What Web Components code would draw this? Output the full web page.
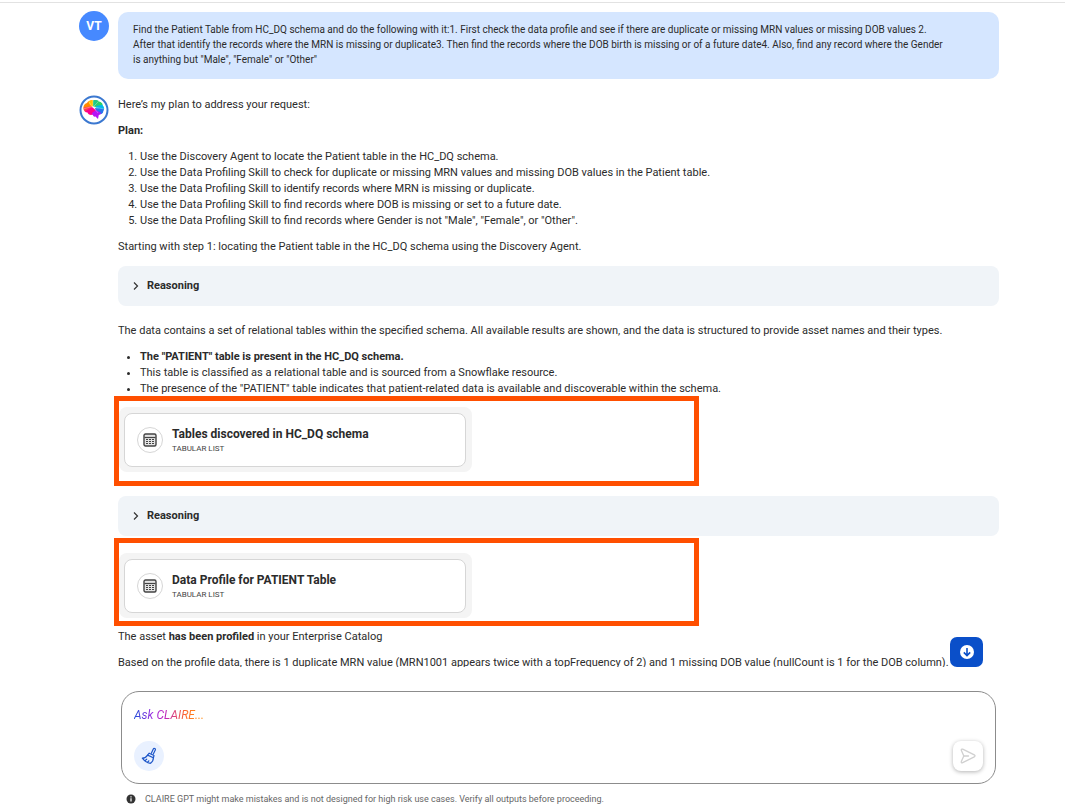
<!DOCTYPE html>
<html lang="en">
<head>
<meta charset="utf-8">
<meta name="viewport" content="width=device-width, initial-scale=1">
<title>CLAIRE GPT</title>
<style>
  body {
    margin: 0;
    background: #fff;
    color: #2b2b2b;
    font: 11px/16px Roboto, "Liberation Sans", sans-serif;
  }
</style>
</head>
<body>
<claire-chat></claire-chat>

<script>
  class ChatMessage extends HTMLElement {
    constructor() {
      super();
      this.attachShadow({ mode: "open" });
    }

    connectedCallback() {
      this.shadowRoot.innerHTML = /*html*/`
        ${ChatMessage.styles}
        <slot name="avatar"></slot>
        <div class="body"><slot></slot></div>
      `;
    }

    static get styles() {
      return /*css*/`
        <style>
          :host {
            display: grid;
            grid-template-columns: 30px minmax(0, 1fr);
            column-gap: 9px;
            align-items: start;
          }
          .body {
            margin-top: 2px;
          }
          :host([from="user"]) .body {
            box-sizing: border-box;
            margin-top: 1px;
            padding: 10px 15px 12px;
            border-radius: 10px;
            background: #d5e6ff;
            font-size: 10px;
            line-height: 15px;
          }
        </style>
      `;
    }
  }

  class UserAvatar extends HTMLElement {
    constructor() {
      super();
      this.attachShadow({ mode: "open" });
    }

    connectedCallback() {
      this.shadowRoot.innerHTML = /*html*/`
        <style>
          :host {
            display: grid;
            place-items: center;
            height: 30px;
            border-radius: 50%;
            background: #4689ff;
            color: #fff;
            font-size: 12px;
            font-weight: 700;
          }
        </style>
        <slot></slot>
      `;
    }
  }

  class ClaireAvatar extends HTMLElement {
    constructor() {
      super();
      this.attachShadow({ mode: "open" });
    }

    connectedCallback() {
      this.shadowRoot.innerHTML = /*html*/`
        <style>
          :host { display: block; height: 30px; }
          svg { display: block; }
        </style>
        <svg width="30" height="30" viewBox="0 0 30 30" aria-hidden="true">
          <defs>
            <clipPath id="brain">
              <path d="M4.500 13.500C4 10.500 6 8.500 8 8C9 6 12 5 14 5.500C16 4.800 18.500 5 20 6.500C22.500 7 24 9 23.800 10.500C25.500 12 25.500 14.500 24.300 16C24.500 18 22.500 19.500 21 19.300L19.800 20L19 24L16.500 21.500C15 22 14 21 14 19.500C11.500 20.500 9 19.500 8.500 17.500C6 17.500 4.500 15.500 4.500 13.500Z"/>
            </clipPath>
          </defs>
          <circle cx="15" cy="15" r="13.500" fill="#fff" stroke="#3b78d0" stroke-width="2"/>
          <g clip-path="url(#brain)">
            <path fill="#ff8a00" d="M3 5H14L13 12L3 15Z"/>
            <path fill="#ffc400" d="M10 4H15L14 12L10 9Z"/>
            <path fill="#1fc888" d="M14 3H20L20 9L14 12Z"/>
            <path fill="#2bd06b" d="M19 5L25 8L21 13L15 12Z"/>
            <path fill="#00b9e8" d="M17 11L27 9L26 16L17 13Z"/>
            <path fill="#2674ed" d="M16 13L27 14L22 21L17 17Z"/>
            <path fill="#ff3b50" d="M3 13L13 11L12 16L4 17Z"/>
            <path fill="#ff008c" d="M5 17L13 12L17 15L14 22H6Z"/>
            <path fill="#b514f5" d="M13 18L17 15L22 18L20 26L13 22Z"/>
          </g>
          <g stroke="#fff" stroke-width=".3" fill="none">
            <path d="M4 14L13 11.500L25 14M10 7L13 11.500M14 5V12M20 6L14 12L19 18"/>
          </g>
        </svg>
      `;
    }
  }

  class ReasoningPanel extends HTMLElement {
    constructor() {
      super();
      this.attachShadow({ mode: "open" });
    }

    connectedCallback() {
      this.shadowRoot.innerHTML = /*html*/`
        ${ReasoningPanel.styles}
        <button type="button" aria-expanded="false">
          <svg width="6" height="8" viewBox="0 0 6 8" fill="none" stroke="#333" stroke-width="1.200" aria-hidden="true">
            <path d="M1 .5L4.500 4L1 7.500"/>
          </svg>
          <slot></slot>
        </button>
      `;
    }

    static get styles() {
      return /*css*/`
        <style>
          :host { display: block; }
          button {
            display: flex;
            align-items: center;
            gap: 8px;
            width: 100%;
            height: 40px;
            padding: 0 15px;
            border: 0;
            border-radius: 8px;
            background: #f0f4f8;
            color: inherit;
            font: inherit;
            font-weight: 700;
            text-align: left;
            cursor: pointer;
          }
        </style>
      `;
    }
  }

  // Orange frame drawn round a result
  class CalloutFrame extends HTMLElement {
    constructor() {
      super();
      this.attachShadow({ mode: "open" });
    }

    connectedCallback() {
      this.shadowRoot.innerHTML = /*html*/`
        <style>
          :host {
            display: block;
            box-sizing: border-box;
            max-width: 585px;
            margin-left: -4px;
            padding: 6px 0 9px;
            border: 5px solid #ff4f00;
          }
          :host([low]) { padding: 10px 0 3px; }
        </style>
        <slot></slot>
      `;
    }
  }

  class ResultCard extends HTMLElement {
    constructor() {
      super();
      this.attachShadow({ mode: "open" });
    }

    connectedCallback() {
      this.shadowRoot.innerHTML = /*html*/`
        ${ResultCard.styles}
        <button type="button">
          <span class="icon">
            <svg width="14" height="14" viewBox="0 0 14 14" fill="none" stroke="#444" aria-hidden="true">
              <rect x="1" y="1" width="12" height="12" rx="1.500" fill="#e4e4e4" stroke-width="1.400"/>
              <path d="M1.500 4.500H12.500" stroke-width="1.200"/>
              <path d="M3 6.500H5M6 6.500H8M9 6.500H11M3 8.500H5M6 8.500H8M9 8.500H11M3 10.500H5M6 10.500H8M9 10.500H11" stroke-width="1.200"/>
            </svg>
          </span>
          <span class="text">
            <span class="title"><slot></slot></span>
            <span class="kind">${this.getAttribute("kind")}</span>
          </span>
        </button>
      `;
    }

    static get styles() {
      return /*css*/`
        <style>
          :host {
            display: block;
            box-sizing: border-box;
            max-width: 353px;
            padding: 6px 6px 5px 5px;
            border-radius: 8px;
            background: #f4f4f4;
          }
          button {
            display: flex;
            align-items: center;
            gap: 9px;
            box-sizing: border-box;
            width: 100%;
            height: 54px;
            padding: 0 12px;
            border: 1px solid #d6d6d6;
            border-radius: 8px;
            background: #fff;
            color: inherit;
            font: inherit;
            text-align: left;
            cursor: pointer;
          }
          .icon {
            display: grid;
            place-items: center;
            box-sizing: border-box;
            width: 26px;
            height: 26px;
            border: 1px solid #d6d6d6;
            border-radius: 50%;
          }
          .text {
            display: flex;
            flex-direction: column;
            gap: 1px;
          }
          .title {
            font-size: 12px;
            font-weight: 700;
            line-height: 16px;
          }
          .kind {
            color: #444;
            font-size: 8px;
            line-height: 12px;
          }
        </style>
      `;
    }
  }

  class PromptComposer extends HTMLElement {
    constructor() {
      super();
      this.attachShadow({ mode: "open" });
    }

    connectedCallback() {
      this.shadowRoot.innerHTML = /*html*/`
        ${PromptComposer.styles}
        <form>
          <input type="text" aria-label="Ask CLAIRE" placeholder="Ask CLAIRE...">
          <div class="actions">
            <button class="clear" type="button" aria-label="Clear chat">
              <svg width="16" height="18" viewBox="0 0 16 18" fill="none" stroke="#1d56c8" stroke-width="1.200" stroke-linejoin="round" stroke-linecap="round" aria-hidden="true">
                <path d="M10.300 6.300L12.300 2C12.900 .8 14.900 1.700 14.300 2.900L12.200 7.200"/>
                <path d="M8.200 6.200L13 8.500L12.400 10.800L6.600 8.100Z"/>
                <path d="M6.600 8.100C5.300 10.200 3.400 11.200 1.300 11.200C3.300 13.800 6.300 16 9.400 16.300C11.400 15 12.400 13 12.400 10.800M4 13.600L5.700 12.200M6.600 15.400L7.800 13.800"/>
              </svg>
            </button>
            <button class="send" type="button" aria-label="Send">
              <svg width="16" height="16" viewBox="0 0 16 16" fill="none" stroke="#d0d0d0" stroke-width="1.300" stroke-linejoin="round" stroke-linecap="round" aria-hidden="true">
                <path d="M1.300 2.300C1 1.200 1.700 .8 2.700 1.200L14.300 6.900C15.300 7.400 15.300 8.300 14.300 8.800L2.700 14.700C1.700 15.200 1 14.600 1.300 13.600L3.800 8Z"/>
                <path d="M3.800 8H8.500"/>
              </svg>
            </button>
          </div>
        </form>
      `;
    }

    static get styles() {
      return /*css*/`
        <style>
          :host { display: block; }
          form {
            display: flex;
            flex-direction: column;
            gap: 18px;
            box-sizing: border-box;
            padding: 15px 12px 12px;
            border: 1px solid #8c8c8c;
            border-radius: 18px;
          }
          input {
            width: 100%;
            height: 16px;
            padding: 0;
            border: 0;
            outline: 0;
            background: none;
            color: inherit;
            font: inherit;
            font-size: 12px;
          }
          input::placeholder {
            background: linear-gradient(90deg, #1f4fd8, #9a2be2 18px, #c026b8 32px, #ff6a2a 52px, #ff8c1a 64px);
            -webkit-background-clip: text;
            background-clip: text;
            color: transparent;
            font-style: italic;
            opacity: 1;
          }
          .actions {
            display: flex;
            justify-content: space-between;
          }
          button {
            display: grid;
            place-items: center;
            width: 30px;
            height: 30px;
            padding: 0;
            border: 0;
            cursor: pointer;
          }
          .clear {
            border-radius: 50%;
            background: #e9f1ff;
          }
          .send {
            border-radius: 8px;
            background: #fff;
            box-shadow: 0 1px 4px rgba(0, 0, 0, .3);
          }
        </style>
      `;
    }
  }

  class ClaireChat extends HTMLElement {
    constructor() {
      super();
      this.attachShadow({ mode: "open" });
    }

    connectedCallback() {
      this.shadowRoot.innerHTML = /*html*/`
        ${ClaireChat.styles}
        <main>
          <div class="thread">
            <chat-message from="user">
              <user-avatar slot="avatar">VT</user-avatar>
              Find the Patient Table from HC_DQ schema and do the following with it:1. First check the data profile and see if there are duplicate or missing MRN values or missing DOB values 2.<br>
              After that identify the records where the MRN is missing or duplicate3. Then find the records where the DOB birth is missing or of a future date4. Also, find any record where the Gender<br>
              is anything but "Male", "Female" or "Other"
            </chat-message>
            <chat-message>
              <claire-avatar slot="avatar"></claire-avatar>
              <p>Here’s my plan to address your request:</p>
              <p><b>Plan:</b></p>
              <ol>
                <li>Use the Discovery Agent to locate the Patient table in the HC_DQ schema.</li>
                <li>Use the Data Profiling Skill to check for duplicate or missing MRN values and missing DOB values in the Patient table.</li>
                <li>Use the Data Profiling Skill to identify records where MRN is missing or duplicate.</li>
                <li>Use the Data Profiling Skill to find records where DOB is missing or set to a future date.</li>
                <li>Use the Data Profiling Skill to find records where Gender is not "Male", "Female", or "Other".</li>
              </ol>
              <p>Starting with step 1: locating the Patient table in the HC_DQ schema using the Discovery Agent.</p>
              <reasoning-panel class="spaced">Reasoning</reasoning-panel>
              <p>The data contains a set of relational tables within the specified schema. All available results are shown, and the data is structured to provide asset names and their types.</p>
              <ul>
                <li><b>The "PATIENT" table is present in the HC_DQ schema.</b></li>
                <li>This table is classified as a relational table and is sourced from a Snowflake resource.</li>
                <li>The presence of the "PATIENT" table indicates that patient-related data is available and discoverable within the schema.</li>
              </ul>
              <callout-frame>
                <result-card kind="TABULAR LIST">Tables discovered in HC_DQ schema</result-card>
              </callout-frame>
              <reasoning-panel class="tight">Reasoning</reasoning-panel>
              <callout-frame low>
                <result-card kind="TABULAR LIST">Data Profile for PATIENT Table</result-card>
              </callout-frame>
              <p class="after">The asset <b>has been profiled</b> in your Enterprise Catalog</p>
              <p>Based on the profile data, there is 1 duplicate MRN value (MRN1001 appears twice with a topFrequency of 2) and 1 missing DOB value (nullCount is 1 for the DOB column).</p>
            </chat-message>
          </div>
          <button class="down" type="button" aria-label="Scroll to latest">
            <svg width="16" height="16" viewBox="0 0 16 16" aria-hidden="true">
              <circle cx="8" cy="8" r="7" fill="#fff"/>
              <path d="M8 4V11.500M4.800 8.400L8 11.600L11.200 8.400" fill="none" stroke="#0a4fc9" stroke-width="1.600"/>
            </svg>
          </button>
        </main>
        <prompt-composer></prompt-composer>
        <footer>
          <svg width="10" height="10" viewBox="0 0 10 10" aria-hidden="true">
            <circle cx="5" cy="5" r="4.500" fill="#333"/>
            <path d="M5 2.200V3.400M5 4.300V7.600" stroke="#fff" stroke-width="1.200"/>
          </svg>
          <span>CLAIRE GPT might make mistakes and is not designed for high risk use cases. Verify all outputs before proceeding.</span>
        </footer>
      `;
    }

    static get styles() {
      return /*css*/`
        <style>
          :host {
            display: flex;
            flex-direction: column;
            box-sizing: border-box;
            height: 100vh;
            padding-top: 2px;
          }
          main {
            position: relative;
            flex: 1;
            min-height: 0;
            border-top: 1px solid #e2e2e2;
          }
          .thread {
            display: flex;
            flex-direction: column;
            gap: 16px;
            box-sizing: border-box;
            height: 100%;
            padding: 8px 66px 0 79px;
            overflow: auto;
            scrollbar-width: none;
          }
          chat-message { flex: none; }
          p { margin: 0 0 10px; }
          ol, ul {
            margin: 0 0 10px;
            padding-left: 22px;
          }
          ul {
            margin-bottom: -1px;
          }
          .spaced { margin: 11px 0 17px; }
          .tight { margin: 10px 0 2px; }
          .after { margin-top: 3px; }
          .down {
            position: absolute;
            right: 82px;
            bottom: 0;
            display: grid;
            place-items: center;
            width: 33px;
            height: 30px;
            padding: 0;
            border: 0;
            border-radius: 7px;
            background: #0a4fc9;
            cursor: pointer;
          }
          prompt-composer {
            margin: 24px 69px 0 121px;
          }
          footer {
            display: flex;
            align-items: center;
            gap: 9px;
            padding: 7px 69px 2px 126px;
            color: #666;
            font-size: 9px;
          }
        </style>
      `;
    }
  }

  customElements.define("chat-message", ChatMessage);
  customElements.define("user-avatar", UserAvatar);
  customElements.define("claire-avatar", ClaireAvatar);
  customElements.define("reasoning-panel", ReasoningPanel);
  customElements.define("callout-frame", CalloutFrame);
  customElements.define("result-card", ResultCard);
  customElements.define("prompt-composer", PromptComposer);
  customElements.define("claire-chat", ClaireChat);
</script>
</body>
</html>
